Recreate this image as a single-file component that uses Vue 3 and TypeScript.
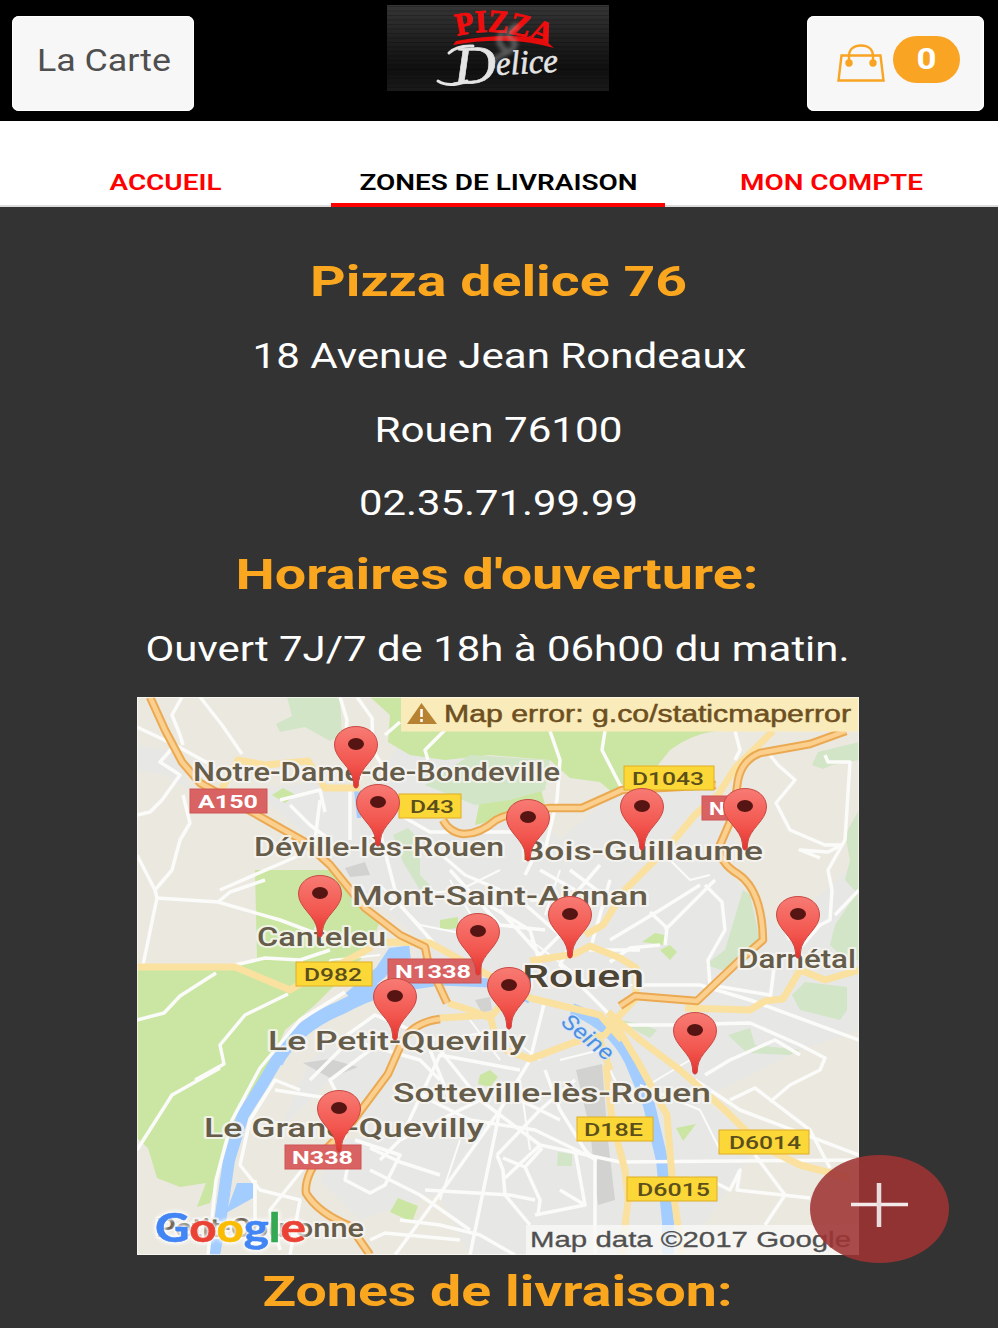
<template>
  <div class="page">
    <header class="topbar">
      <button class="top-btn">
        <svg width="182" height="95">
          <text x="25" y="54.500" font-size="31.5" fill="#4f4f4f" textLength="134" lengthAdjust="spacingAndGlyphs">La Carte</text>
        </svg>
      </button>

      <svg class="logo" viewBox="0 0 222 86" width="222" height="86">
        <defs>
          <linearGradient id="metal" x1="0" y1="0" x2="0" y2="1">
            <stop offset="0" stop-color="#353535" />
            <stop offset=".5" stop-color="#1b1b1b" />
            <stop offset=".75" stop-color="#101010" />
            <stop offset="1" stop-color="#1a1a1a" />
          </linearGradient>
          <pattern id="brushed" width="222" height="9" patternUnits="userSpaceOnUse">
            <path d="M0 1.5H222M0 6H222" stroke="#000" stroke-opacity=".22" />
          </pattern>
          <filter id="smoke" x="-50%" y="-50%" width="200%" height="200%">
            <feGaussianBlur stdDeviation="2" />
          </filter>
          <path id="arc" d="M70 31Q116 19 163 42" />
        </defs>
        <rect width="222" height="86" fill="url(#metal)" />
        <rect width="222" height="86" fill="url(#brushed)" />
        <text class="logo-top">
          <textPath href="#arc" textLength="94" lengthAdjust="spacingAndGlyphs">PIZZA</textPath>
        </text>
        <path d="M69 36Q118 27 156 34L167 43Q120 30 66 40Z" fill="#e60c0c" />
        <g filter="url(#smoke)" fill="none" stroke="#aaa" stroke-opacity=".5" stroke-width="5">
          <path d="M131 20Q114 29 127 36Q132 43 113 51Q104 54 106 64" />
          <path d="M116 27Q107 38 119 45" />
        </g>
        <path d="M62 48Q70 40 86 41M51 76Q62 83 80 76" class="swash" />
        <g transform="rotate(-3 110 60)">
          <text x="66" y="77" class="logo-script initial" textLength="43" lengthAdjust="spacingAndGlyphs">D</text>
          <text x="109" y="70" class="logo-script" textLength="62" lengthAdjust="spacingAndGlyphs">elice</text>
        </g>
      </svg>

      <button class="top-btn cart">
        <svg class="bag" viewBox="0 0 48 38" width="48" height="38" fill="none" stroke="#f9a423" stroke-width="2.4">
          <path d="M4.500 11.500H43.500L46.500 36.500H1.500Z" />
          <path d="M12 18V12C12 5 17 1.500 24 1.500S36 5 36 12V18" />
          <circle cx="12" cy="19" r="2.500" fill="#f9a423" />
          <circle cx="36" cy="19" r="2.500" fill="#f9a423" />
        </svg>
        <span class="badge">
          <svg width="67" height="47">
            <text x="23.500" y="33" font-size="29.500" font-weight="700" fill="#fff" textLength="20" lengthAdjust="spacingAndGlyphs">0</text>
          </svg>
        </span>
      </button>
    </header>

    <nav class="tabs">
      <a v-for="tab in tabs" :key="tab.label" :class="['tab', { active: tab.active }]">
        <svg width="331" height="36">
          <text x="165.500" y="21" :textLength="tab.width" lengthAdjust="spacingAndGlyphs" text-anchor="middle">{{ tab.label }}</text>
        </svg>
      </a>
    </nav>

    <main class="content">
      <component :is="line.title ? 'h2' : 'p'" v-for="line in lines" :key="line.text" :class="['line', { title: line.title }]">
        <svg width="998" height="73">
          <text :x="line.x" :y="line.title ? 52 : 50.500" :textLength="line.width" lengthAdjust="spacingAndGlyphs" text-anchor="middle">{{ line.text }}</text>
        </svg>
      </component>

      <svg class="map" viewBox="137 697 722 558" width="722" height="558">
        <defs>
          <linearGradient id="pin-fill" x1="0" y1="0" x2="0" y2="1">
            <stop offset="0" stop-color="#f77b74" />
            <stop offset=".6" stop-color="#f2564e" />
            <stop offset="1" stop-color="#e4332f" />
          </linearGradient>
          <g id="pin">
            <path d="M0 44C-1.500 44-2.500 43-2.500 38C-3.500 23-21.500 15-21.500 1C-21.500-10-12-17.500 0-17.500S21.500-10 21.500 1C21.500 15 3.500 23 2.500 38C2.500 43 1.500 44 0 44Z" fill="url(#pin-fill)" stroke="#c94a44" />
            <ellipse rx="8" ry="6" fill="#561512" />
          </g>
        </defs>

        <rect x="137" y="697" width="722" height="558" fill="#ebe8df" />
        <path v-for="(d, i) in urban" :key="'u' + i" :d="d" fill="#e7e7e5" />
        <path v-for="(d, i) in woods" :key="'w' + i" :d="d" fill="#cae6a2" />
        <path v-for="(d, i) in parks" :key="'p' + i" :d="d" fill="#d2e5c7" />
        <path v-for="(d, i) in rail" :key="'g' + i" :d="d" fill="#d2d2d0" />

        <g class="water">
          <path d="M440 978Q388 982 340 1008Q296 1026 276 1062" stroke-width="14" />
          <path d="M284 1048L262 1085L243 1115L229 1160L220 1222L214 1255" stroke-width="12" />
          <path d="M350 998L381 972L393 954L410 952" stroke-width="13" />
          <path d="M400 987L440 981L490 983L530 999" stroke-width="9" />
          <path d="M530 999L574 1010" stroke-width="4" stroke-dasharray="12 4" />
          <path d="M572 1009Q612 1024 630 1060L649 1105L662 1160L668 1222V1255" stroke-width="12" />
          <path d="M237 1183H253V1198L226 1213Z" class="dock" />
          <path d="M354 790H361V818H357Z" class="dock" />
        </g>

        <g class="streets">
          <path v-for="(d, i) in streets" :key="'s' + i" :d="d" />
        </g>
        <g class="minor">
          <path v-for="(d, i) in minor" :key="'m' + i" :d="d" />
        </g>
        <g class="secondary">
          <path v-for="(d, i) in secondary" :key="'y' + i" :d="d" />
        </g>
        <g class="major-case">
          <path v-for="(d, i) in major" :key="'c' + i" :d="d" />
        </g>
        <g class="major">
          <path v-for="(d, i) in major" :key="'o' + i" :d="d" />
        </g>

        <text class="river" transform="translate(560 1024) rotate(39)" textLength="60" lengthAdjust="spacingAndGlyphs">Seine</text>

        <g v-for="s in shields" :key="s.text + s.x">
          <rect :x="s.x" :y="s.y" :width="s.w" height="24" :fill="s.red ? '#d96363' : '#fbd737'" :stroke="s.red ? '#d05555' : '#dfae25'" />
          <text :x="s.tx" :y="s.y + 18.500" :class="s.red ? 'shield-red' : 'shield'" :textLength="s.tw" lengthAdjust="spacingAndGlyphs">{{ s.text }}</text>
        </g>

        <text
          v-for="p in places" :key="p.text" :x="p.x" :y="p.y" :class="['place', { city: p.city }]"
          :textLength="p.w" lengthAdjust="spacingAndGlyphs"
        >{{ p.text }}</text>

        <use v-for="(p, i) in pins" :key="'pin' + i" href="#pin" :x="p[0]" :y="p[1]" />

        <rect x="401" y="697" width="458" height="34.500" fill="#f9ebba" />
        <path d="M421.500 703L437 724H407Z" fill="#b78231" />
        <path d="M421.500 709V717M421.500 719V722" stroke="#fff" stroke-width="2.500" />
        <text x="444" y="722" class="notice" textLength="407" lengthAdjust="spacingAndGlyphs">Map error: g.co/staticmaperror</text>

        <rect x="526" y="1225" width="333" height="30" fill="#f8f8f6" fill-opacity=".82" />
        <text x="530" y="1247" class="credit" textLength="321" lengthAdjust="spacingAndGlyphs">Map data ©2017 Google</text>

        <text x="155" y="1242" class="google" textLength="151" lengthAdjust="spacingAndGlyphs"><tspan
          v-for="(g, i) in google" :key="i" :fill="g[1]" :stroke="g[1]">{{ g[0] }}</tspan></text>
        <rect x="137.500" y="697.500" width="721" height="557" fill="none" stroke="#fbfbf5" stroke-opacity=".7" />
      </svg>

      <h2 class="line title">
        <svg width="998" height="73">
          <text x="497.500" y="52" textLength="470" lengthAdjust="spacingAndGlyphs" text-anchor="middle">Zones de livraison:</text>
        </svg>
      </h2>
    </main>

    <button class="fab" aria-label="Ajouter">
      <svg viewBox="0 0 139 108" width="139" height="108">
        <path d="M41 49.500H98" stroke="#f4e9e9" stroke-width="3.500" />
        <path d="M69 28V72" stroke="#e9dcdc" stroke-width="4.500" />
      </svg>
    </button>
  </div>
</template>

<script setup lang="ts">
interface Line { text: string; width: number; x: number; title?: boolean }
interface Place { text: string; x: number; y: number; w: number; city?: boolean }
interface Shield { text: string; x: number; y: number; w: number; tx: number; tw: number; red?: boolean }

const tabs = [
  { label: 'ACCUEIL', width: 112, active: false },
  { label: 'ZONES DE LIVRAISON', width: 278, active: true },
  { label: 'MON COMPTE', width: 183, active: false },
]

const lines: Line[] = [
  { text: 'Pizza delice 76', width: 377, x: 498.5, title: true },
  { text: '18 Avenue Jean Rondeaux', width: 494, x: 499.5 },
  { text: 'Rouen 76100', width: 248, x: 498.5 },
  { text: '02.35.71.99.99', width: 279, x: 498.5 },
  { text: "Horaires d'ouverture:", width: 523, x: 497, title: true },
  { text: 'Ouvert 7J/7 de 18h à 06h00 du matin.', width: 704, x: 497.5 },
]

const places: Place[] = [
  { text: 'Notre-Dame-de-Bondeville', x: 193, y: 781, w: 367 },
  { text: 'Déville-lès-Rouen', x: 254, y: 856, w: 250 },
  { text: 'Bois-Guillaume', x: 522, y: 860, w: 241 },
  { text: 'Mont-Saint-Aignan', x: 352, y: 905, w: 296 },
  { text: 'Canteleu', x: 257, y: 946, w: 129 },
  { text: 'Darnétal', x: 738, y: 968, w: 118 },
  { text: 'Rouen', x: 522, y: 987, w: 122, city: true },
  { text: 'Le Petit-Quevilly', x: 268, y: 1050, w: 258 },
  { text: 'Sotteville-lès-Rouen', x: 393, y: 1102, w: 318 },
  { text: 'Le Grand-Quevilly', x: 204, y: 1137, w: 280 },
  { text: 'Petit-Couronne', x: 156, y: 1237, w: 208 },
]

const shields: Shield[] = [
  { text: 'A150', x: 190, y: 789, w: 77, tx: 198, tw: 60, red: true },
  { text: 'D43', x: 399, y: 794, w: 62, tx: 410, tw: 44 },
  { text: 'D1043', x: 624, y: 766, w: 90, tx: 632, tw: 72 },
  { text: 'N28', x: 702, y: 796, w: 52, tx: 709, tw: 42, red: true },
  { text: 'D982', x: 296, y: 962, w: 76, tx: 304, tw: 58 },
  { text: 'N1338', x: 388, y: 959, w: 93, tx: 395, tw: 76, red: true },
  { text: 'N338', x: 285, y: 1145, w: 76, tx: 292, tw: 61, red: true },
  { text: 'D18E', x: 577, y: 1117, w: 76, tx: 584, tw: 59 },
  { text: 'D6014', x: 719, y: 1130, w: 90, tx: 729, tw: 72 },
  { text: 'D6015', x: 627, y: 1177, w: 90, tx: 637, tw: 73 },
]

// x and y of each marker's dot
const pins = [
  [356, 744], [642, 806], [745, 806], [378, 802], [528, 817], [320, 893], [570, 914],
  [798, 914], [478, 931], [509, 985], [395, 996], [695, 1030], [339, 1108],
]

const google = [
  ['G', '#4285f4'], ['o', '#ea4335'], ['o', '#fbbc05'], ['g', '#4285f4'], ['l', '#34a853'], ['e', '#ea4335'],
]

const urban = [
  'M137 745L175 752L190 790L165 775L137 770Z',
  'M255 790L330 780L375 790L400 740L480 760L560 840L620 790L680 770L715 780L735 840L725 870L780 930L859 860V1030L800 1050L700 1100L760 1140L700 1230L640 1255H470L420 1160L370 1140L330 1080L280 1130L310 1060L400 1000L420 940L340 870L300 830Z',
  'M340 1140L420 1130L450 1190L360 1220L320 1180Z',
]
const woods = [
  'M370 697H401V731H715Q690 735 670 750L650 775L615 795L600 782L570 778L550 760L490 755L445 760L410 755L388 742L390 715Z',
  'M255 870H330L360 900L380 920L370 950L335 985L315 1005L285 1030L265 1075L240 1105L225 1150L210 1203L197 1207L206 1183L180 1187L157 1178L148 1148L137 1138V967H235L257 958Z',
  'M480 800L540 785L545 805L505 818L475 825Z',
  'M272 795L283 788L296 795L285 803Z',
  'M642 942L655 933L665 935V945Z M660 950L670 945L677 952L670 960Z',
  'M480 1075L490 1070L498 1077L490 1087L478 1084Z',
  'M390 1212L398 1198L418 1206L412 1222Z',
  'M676 1128L696 1124L683 1141Z',
  'M440 920L458 917V928L440 930Z',
]
const parks = [
  'M287 697H340L342 735L330 741L305 727L280 732L276 724L292 716Z',
  'M425 785L470 755L550 760L545 790L510 800L475 805Z',
  'M393 835L408 828L420 840L420 875L430 885L420 890L403 862Z',
  'M812 765L818 752L859 742V760L832 765L823 769Z',
  'M859 890L835 925L830 945L845 960H859Z',
  'M792 995L805 982L847 987V1010L840 1020L800 1010Z',
  'M743 890L750 895L760 940L745 960L722 970L705 965L725 950Z',
  'M728 1035L750 1028L755 1045L800 1050L790 1055L747 1053Z',
  'M612 1018L645 1025L657 1030L650 1038Z',
  'M558 1152L572 1154V1166H557Z',
  'M859 810L845 835L850 860L845 880L859 895Z',
]
const rail = [
  'M576 1070L602 1064L608 1140L615 1200L598 1205L590 1130Z',
  'M475 1000L490 997L492 1010L482 1013Z',
  'M303 1063L330 1059L358 1067L330 1078Z',
  'M345 868L365 862L370 875L350 877Z',
]

const streets = [
  'M137 727L175 745L215 767', 'M182 697L172 715L180 735L183 745', 'M200 697L222 725L242 754',
  'M175 745L160 762L180 775L162 800L150 812L137 815', 'M183 795L190 823L180 840L172 870L155 890L137 855',
  'M155 890L157 898L143 965', 'M157 898L218 902L280 920L320 935', 'M218 902L230 892L265 880', 'M220 890L300 855',
  'M137 1020L164 1013L180 996L216 973', 'M195 1080L224 1064L220 1045L245 1015L288 994',
  'M137 1150L172 1095L220 1068', 'M235 965L265 958L300 960L330 950',
  'M340 697L347 720L345 740', 'M357 697L372 718L373 750L385 770', 'M376 790L382 840L395 890L410 900',
  'M445 730L425 750L428 760', 'M550 731L560 760L557 800L545 850', 'M605 731L602 750L620 785L650 815',
  'M735 731L740 750L735 760', 'M770 755L778 765L795 780L776 803L790 830L825 845H842',
  'M842 845L828 852L800 850L820 858', 'M825 755L828 762H850L845 840L828 870L832 890L830 920L820 925L798 950',
  'M859 890L835 915', 'M385 735L400 722', 'M400 815L430 832H520', 'M430 845L465 875L500 890',
  'M525 875L535 855', 'M280 800L320 790L325 812M290 805L310 825L330 840M320 800L315 840M350 790V840',
  'M610 940L660 910L700 885M650 912L667 928L665 945M665 930L715 880M660 945L630 948L610 962',
  'M705 885L722 902L725 930L708 960L710 985L770 995M780 920L790 940M775 960L770 1000',
  'M635 985L700 985L750 1000L859 1040', 'M620 1025L670 1025L750 1023L800 1045L825 1058L820 1070L790 1085L770 1102',
  'M695 1080L740 1110L859 1155M730 1100L755 1088L810 1130L830 1168', 'M755 1155L785 1195L765 1225',
  'M690 1178L710 1180L730 1190L740 1170L737 1190L810 1198', 'M705 1075L730 1060L775 1040L800 1055',
  'M400 905L440 950L478 970', 'M500 910L540 955L560 935L520 900M480 900L530 930L545 980M450 870L500 925L545 930',
  'M590 905L560 965L610 1015M610 880L590 950L640 950', 'M570 870L610 900M540 870L575 890M600 865L570 900L530 900',
  'M545 1070L560 1110L585 1150L595 1160L595 1255', 'M545 1000L530 1060L500 1110L470 1255',
  'M440 1050L480 1100L540 1145L620 1162L859 1160', 'M500 1110L450 1180L395 1255',
  'M370 1148L400 1162L440 1175M370 1170L420 1195L470 1230M425 1190L510 1195L535 1200',
  'M497 1155L503 1170L505 1195L530 1225M503 1158L525 1167L540 1200L538 1215M497 1155L540 1110L575 1080',
  'M540 1145L505 1178M525 1167L542 1148', 'M370 1240L385 1233L460 1240M400 1220L440 1225L480 1235L515 1255',
  'M400 1140L440 1055L520 1070', 'M380 1160L400 1140L500 1090L560 1120', 'M410 1090L470 1120L535 1130L597 1160',
  'M560 1190L585 1205L535 1215M575 1150L585 1205', 'M355 1140L400 1155L385 1185L370 1193L345 1180L350 1155',
  'M300 1090L275 1080L250 1120L240 1165L260 1190L300 1200L290 1255', 'M275 1090L340 1100L330 1080L370 1050',
  'M310 1080L350 1040L420 1060L440 1080M340 1040L375 1015L435 1040', 'M255 1180V1225L320 1230',
  'M310 1160L270 1210L280 1250', 'M430 1050L450 1100L395 1090',
  'M345 992L300 1020L260 1068L232 1120L216 1180L208 1255',
]
const minor = [
  'M330 960L380 955M300 960L325 985L330 960', 'M380 885L420 925L470 935M450 880L480 930',
  'M530 940L590 985L650 985', 'M440 1040L500 1030L540 1060M470 1020L500 1060',
  'M560 1060L600 1050L620 1090M640 1085L700 1110L720 1150', 'M390 910L410 895L460 890L500 870',
  'M460 1140L440 1200M520 1080L530 1150', 'M640 1090L690 1060M560 870L545 915M660 850L690 880L710 875',
]
const secondary = [
  'M220 792L238 760L265 765L308 761L325 788H360', 'M137 967H235L290 990L315 975L340 964L372 947',
  'M773 731L735 768L718 795L695 815L670 845L625 890L603 925L585 935',
  'M385 942L430 943L470 965L530 998L600 1015L622 1040', 'M530 961L575 954L590 946L620 958L636 968V998',
  'M448 1003L470 1010L490 1018L505 1000M440 1018L490 1015L495 1035',
  'M685 1008L750 1010L765 1001L783 999L800 970L825 980L859 970',
  'M505 1050L530 1059L575 1042L605 1035L620 1015L636 998', 'M608 1012L640 1040L680 1070L725 1110L760 1145L800 1165L850 1178',
  'M610 1015L638 1062L667 1115L673 1190L682 1255', 'M606 1065L612 1120L625 1170L628 1200L622 1255',
  'M600 1040L610 1070',
]
const major = [
  'M150 697L165 730L182 762L200 783L245 808L305 842L330 865L365 908L400 935L425 947L428 962L447 1003',
  'M443 820Q450 833 464 834Q480 834 496 820Q510 812 550 808H582L622 790L716 785',
  'M846 731L810 744L760 753Q742 760 738 780L733 815L720 845Q718 862 738 874Q762 890 763 940L740 960L697 1001L635 996L620 1006',
  'M440 1019Q415 1022 403 1040L388 1074L350 1125L325 1150Q304 1175 306 1193Q318 1213 350 1226L370 1255',
]
</script>

<style scoped>
.page {
  position: relative;
  width: 998px;
  height: 1328px;
  background: #333;
  font-family: Roboto, sans-serif;
  overflow: hidden;
}

svg { display: block; }

.topbar {
  display: grid;
  grid-template-columns: 375px 222px 375px;
  height: 121px;
  padding-left: 12px;
  background: #000;
}

.top-btn {
  width: 182px;
  height: 95px;
  margin-top: 16px;
  padding: 0;
  border: 0;
  border-radius: 7px;
  background: #f7f7f7;
  box-shadow: inset 0 0 0 1px #fff;
  font-family: inherit;
}

.logo { margin-top: 5px; }
.logo-top {
  font: bold 32px "Liberation Serif", serif;
  fill: #ef0d0d;
  stroke: #ef0d0d;
  stroke-width: .8px;
}
.swash {
  fill: none;
  stroke: #e4e4e4;
  stroke-width: 3;
  stroke-linecap: round;
}
.logo-script {
  font: italic 34px "Liberation Serif", serif;
  fill: #e4e4e4;
  stroke: #e4e4e4;
  stroke-width: .6px;
}
.logo-script.initial { font-size: 54px; }

.cart {
  display: flex;
  justify-self: end;
  width: 177px;
  padding: 20px 0 0 30px;
}
.bag { margin: 8px 8px 0 0; }
.badge {
  width: 67px;
  height: 47px;
  border-radius: 24px;
  background: #f9a423;
}

.tabs {
  display: grid;
  grid-template-columns: 331px 334px 333px;
  height: 86px;
  background: #fff;
  box-shadow: inset 0 -2px #dcdcdc;
}
.tab {
  display: flex;
  align-items: flex-end;
  justify-content: center;
  box-sizing: border-box;
  border-bottom: 4px solid transparent;
  font-size: 21.5px;
  font-weight: 600;
  fill: #f00;
}
.tab svg { margin-bottom: -2px; }
.tab.active { border-color: #f00; fill: #000; }

.content { padding-top: 37px; }
.line {
  height: 73.3px;
  margin: 0;
  font-size: 35px;
  font-weight: 400;
  fill: #fff;
}
.line.title {
  font-size: 42px;
  font-weight: 700;
  fill: #faa61f;
}

.map { margin: 13px 0 0 137px; }
.water path { fill: none; stroke: #a3ccff; }
.water .dock { fill: #a3ccff; stroke: none; }
.streets path, .minor path {
  fill: none;
  stroke: #fbfbfa;
  stroke-width: 3.5;
  stroke-linejoin: round;
}
.minor path { stroke-width: 2; }
.secondary path {
  fill: none;
  stroke: #fae1a0;
  stroke-width: 7;
  stroke-linejoin: round;
}
.major-case path, .major path {
  fill: none;
  stroke: #eba951;
  stroke-width: 8.5;
  stroke-linejoin: round;
}
.major path { stroke: #fbd08f; stroke-width: 4.5; }

.place {
  font-size: 25px;
  font-weight: 500;
  fill: #665c4a;
  stroke: #f6f5f1;
  stroke-width: 4px;
  stroke-opacity: .85;
  stroke-linejoin: round;
  paint-order: stroke;
}
.place.city { font-size: 31px; fill: #4c4435; }
.shield { font-size: 19px; font-weight: 500; fill: #5b4f1c; }
.shield-red { font-size: 19px; font-weight: 700; fill: #fff; }
.river { font-size: 22px; font-style: italic; fill: #4c8fe0; stroke: #d5e5f8; stroke-width: 2px; paint-order: stroke; }
.notice {
  font: 23px "Liberation Sans", sans-serif;
  fill: #6e4f1f;
  stroke: #6e4f1f;
  stroke-width: .5px;
}
.credit {
  font: 22px "Liberation Sans", sans-serif;
  fill: #505050;
  stroke: #505050;
  stroke-width: .3px;
}
.google {
  font: bold 40px Lato, sans-serif;
  stroke-width: .6px;
  filter: drop-shadow(0 0 2px #fff) drop-shadow(0 0 2px #fff);
}

.map + .line { margin-top: -1px; }

.fab {
  position: absolute;
  left: 810px;
  top: 1155px;
  width: 139px;
  height: 108px;
  padding: 0;
  border: 0;
  border-radius: 50%;
  background: rgba(158, 51, 51, .88);
}
</style>

<style>
body { background: #fff; }
</style>
